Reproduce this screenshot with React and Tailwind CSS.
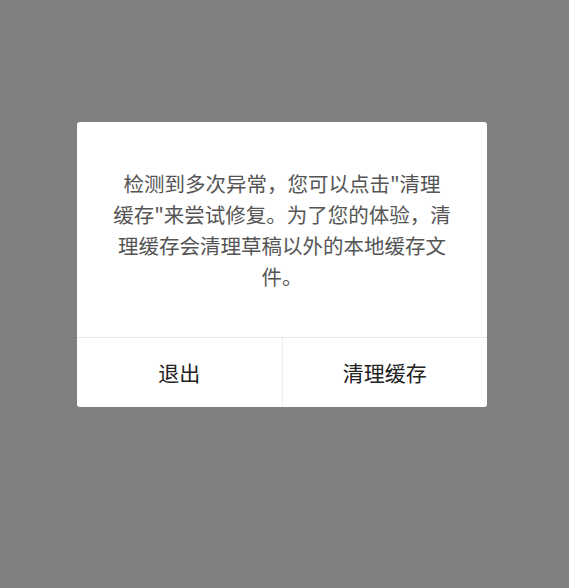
export default function App() {
  return (
    <div
      className="w-[569px] h-[588px] bg-[#808080] pt-[122px] pl-[77px]"
      style={{ fontFamily: '"Noto Sans CJK SC", "Noto Sans", sans-serif' }}
    >
      <div className="w-[410px] bg-white rounded-[3px] overflow-hidden">
        <div className="px-[30px] pt-[46px] pb-[45px] text-center text-[20.5px] leading-[31px] text-[#555555] whitespace-nowrap">
          检测到多次异常，您可以点击"清理
          <br />
          缓存"来尝试修复。为了您的体验，清
          <br />
          理缓存会清理草稿以外的本地缓存文
          <br />
          件。
        </div>
        <div className="flex h-[70px] border-t border-[#e6e6e6]">
          <button className="flex-1 flex items-center justify-center text-[21px] text-[#222222]">
            退出
          </button>
          <div className="w-px bg-[#ececec]" />
          <button className="flex-1 flex items-center justify-center text-[21px] text-[#222222]">
            清理缓存
          </button>
        </div>
      </div>
    </div>
  );
}
